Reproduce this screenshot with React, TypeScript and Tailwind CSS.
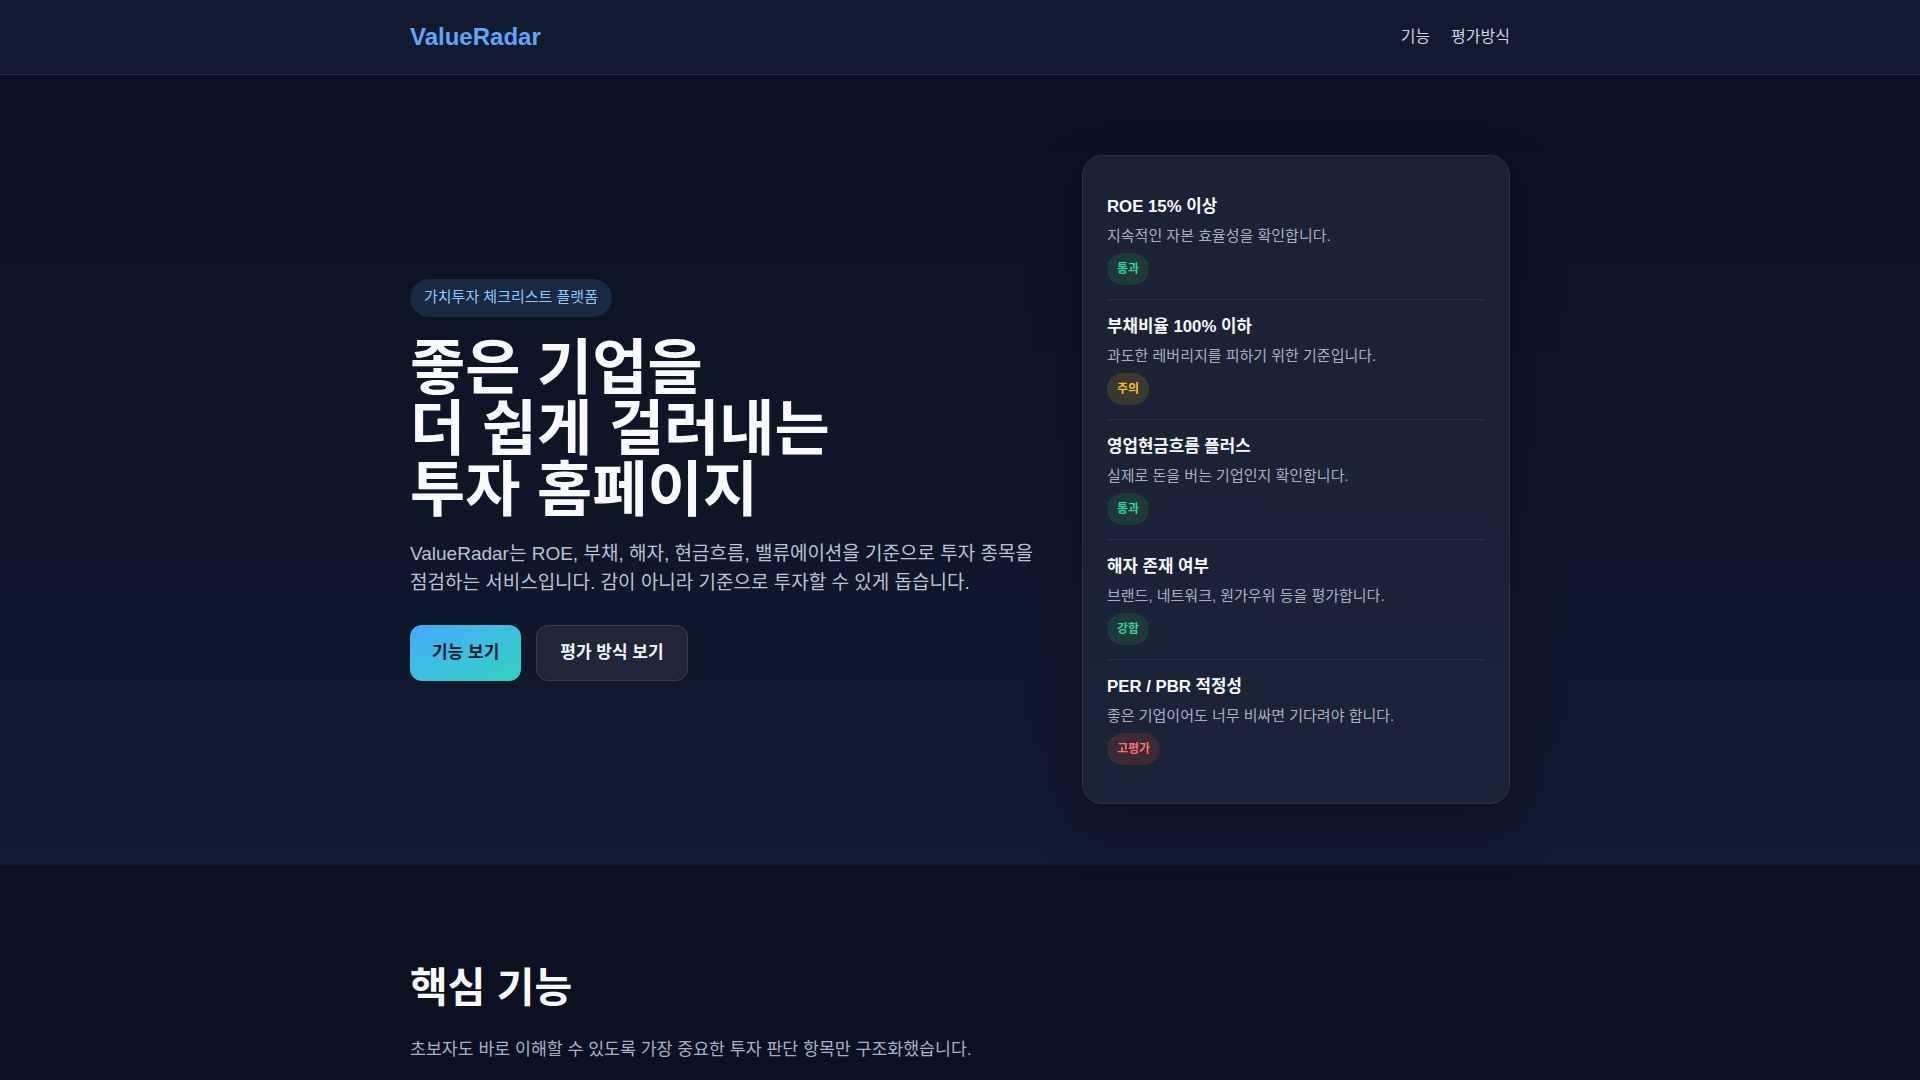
import React from "react";

const checks = [
  {
    title: "ROE 15% 이상",
    desc: "지속적인 자본 효율성을 확인합니다.",
    status: "통과",
    tone: "good",
  },
  {
    title: "부채비율 100% 이하",
    desc: "과도한 레버리지를 피하기 위한 기준입니다.",
    status: "주의",
    tone: "warn",
  },
  {
    title: "영업현금흐름 플러스",
    desc: "실제로 돈을 버는 기업인지 확인합니다.",
    status: "통과",
    tone: "good",
  },
  {
    title: "해자 존재 여부",
    desc: "브랜드, 네트워크, 원가우위 등을 평가합니다.",
    status: "강함",
    tone: "good",
  },
  {
    title: "PER / PBR 적정성",
    desc: "좋은 기업이어도 너무 비싸면 기다려야 합니다.",
    status: "고평가",
    tone: "bad",
  },
];

const toneClass: Record<string, string> = {
  good: "bg-[#1d3a39] text-[#34d399]",
  warn: "bg-[#3a3630] text-[#fbbf24]",
  bad: "bg-[#3d2a34] text-[#f87171]",
};

function Header() {
  return (
    <header className="border-b border-[#232b3d] bg-[#111a2e]">
      <div className="mx-auto flex h-[74px] max-w-[1100px] items-center justify-between">
        <a className="text-[24px] font-bold text-[#60a5fa]">ValueRadar</a>
        <nav className="flex items-center gap-[21px] text-[16px] text-[#cbd5e1]">
          <a>기능</a>
          <a>평가방식</a>
        </nav>
      </div>
    </header>
  );
}

function CheckCard() {
  return (
    <div className="rounded-[20px] border border-[#2a3345] bg-gradient-to-b from-[#1b2233] to-[#1b2337] px-6 py-6 shadow-[0_20px_50px_rgba(0,0,0,0.35)]">
      {checks.map((item, index) => (
        <div
          key={item.title}
          className={
            index > 0
              ? "border-t border-[#2b3447] py-[14px]"
              : "py-[14px]"
          }
        >
          <div className="text-[16.8px] font-bold leading-[25px] text-[#f8fafc]">
            {item.title}
          </div>
          <div className="mt-[7px] text-[15px] leading-[20px] text-[#a7b1c2]">
            {item.desc}
          </div>
          <div
            className={`mt-[7px] inline-flex h-[32px] items-center rounded-full px-2.5 text-[12px] font-bold ${toneClass[item.tone]}`}
          >
            {item.status}
          </div>
        </div>
      ))}
    </div>
  );
}

function Hero() {
  return (
    <section className="bg-gradient-to-b from-[#0b1120] to-[#111a2f] pb-[61px] pt-20">
      <div className="mx-auto grid max-w-[1100px] grid-cols-[minmax(0,1fr)_428px] items-center gap-10">
        <div>
          <span className="inline-flex h-[38px] items-center rounded-full bg-[#1a2942] px-[14px] text-[15px] text-[#93c5fd]">
            가치투자 체크리스트 플랫폼
          </span>
          <h1 className="mt-[21px] text-[60px] font-bold leading-[61px] text-[#f8fafc]">
            좋은 기업을
            <br />
            더 쉽게 걸러내는
            <br />
            투자 홈페이지
          </h1>
          <p className="mt-[18px] text-[19px] leading-[29.5px] text-[#bac4d4]">
            ValueRadar는 ROE, 부채, 해자, 현금흐름, 밸류에이션을 기준으로 투자
            종목을
            <br />
            점검하는 서비스입니다. 감이 아니라 기준으로 투자할 수 있게
            돕습니다.
          </p>
          <div className="mt-[27px] flex gap-[15px]">
            <button className="h-[56px] rounded-[12px] bg-gradient-to-br from-[#4aa8fb] to-[#2dd4bf] px-[22px] text-[17px] font-bold text-[#0f172a]">
              기능 보기
            </button>
            <button className="h-[56px] rounded-[12px] border border-[#353e51] bg-[#1f2637] px-[23px] text-[17px] font-bold text-[#f1f5f9]">
              평가 방식 보기
            </button>
          </div>
        </div>
        <CheckCard />
      </div>
    </section>
  );
}

function Features() {
  return (
    <section className="bg-[#0b1120] pb-24 pt-[99px]">
      <div className="mx-auto max-w-[1100px]">
        <h2 className="text-[41px] font-bold leading-[48px] text-[#f8fafc]">
          핵심 기능
        </h2>
        <p className="mt-6 text-[17.3px] leading-[26px] text-[#a7b1c2]">
          초보자도 바로 이해할 수 있도록 가장 중요한 투자 판단 항목만 구조화했습니다.
        </p>
      </div>
    </section>
  );
}

export default function App() {
  return (
    <div
      className="min-h-screen bg-[#0b1120]"
      style={{ fontFamily: '"Liberation Sans", "Noto Sans CJK KR", sans-serif' }}
    >
      <Header />
      <Hero />
      <Features />
    </div>
  );
}
